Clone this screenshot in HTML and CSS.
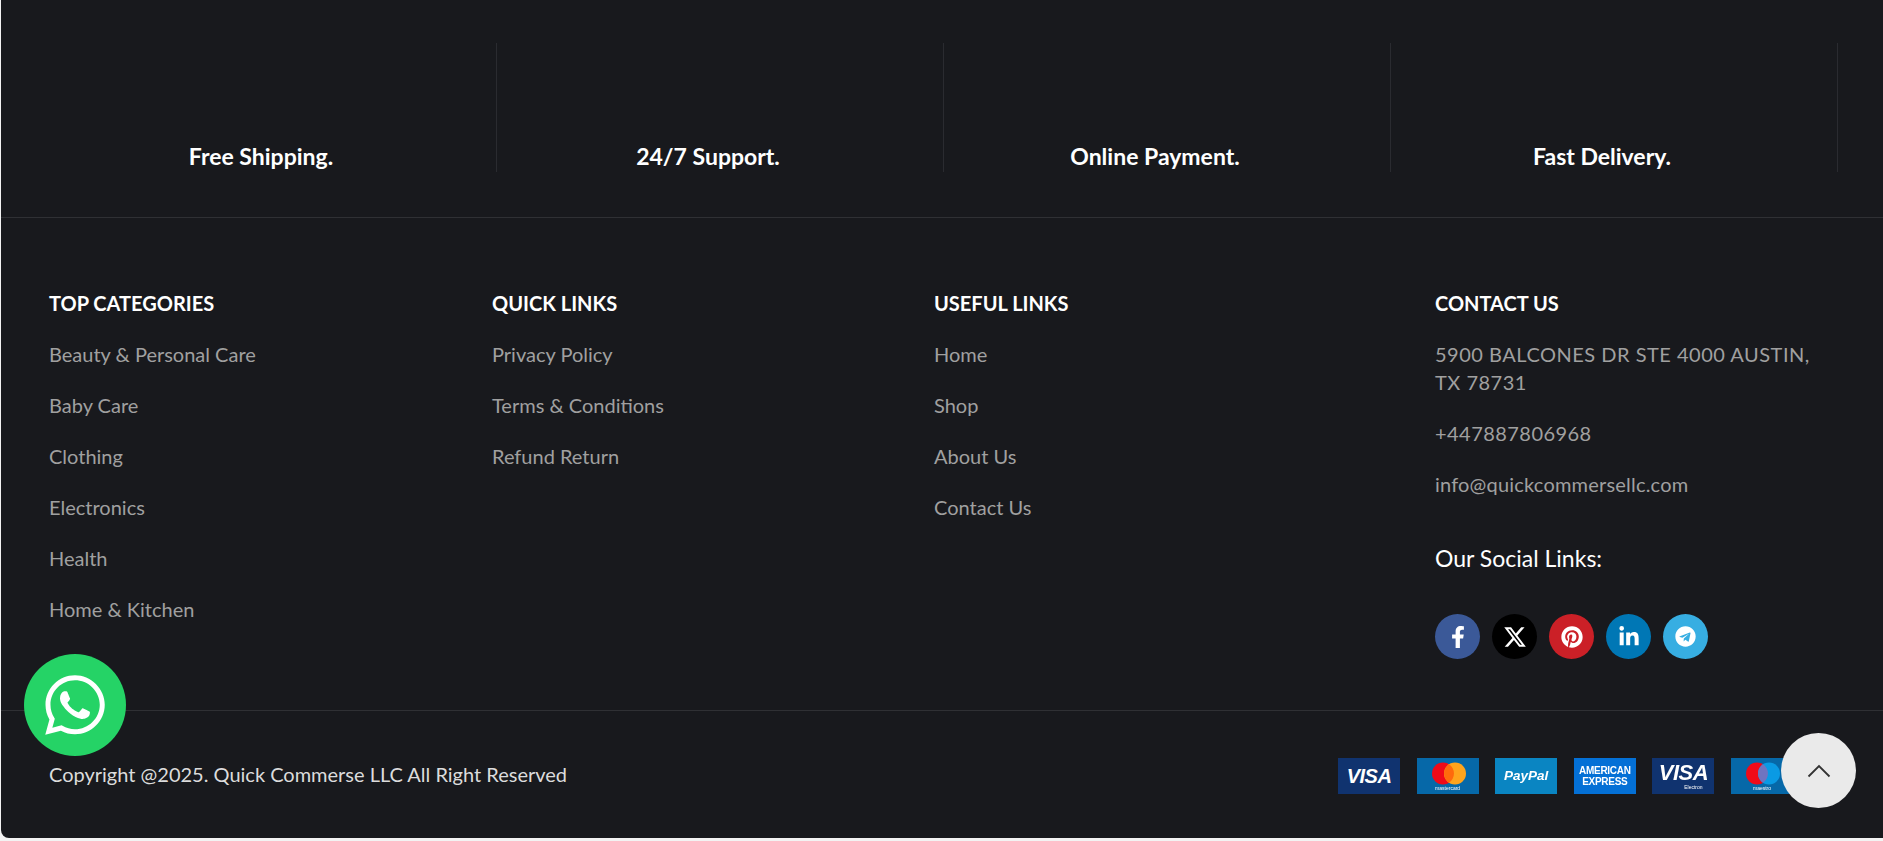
FILE: index.html
```html
<!DOCTYPE html>
<html lang="en">
<head>
<meta charset="utf-8">
<title>Quick Commerse LLC</title>
<link rel="stylesheet" href="styles.css">
</head>
<body>
<footer class="footer">
  <section class="features">
    <div class="feature"><span>Free Shipping.</span></div>
    <div class="feature"><span>24/7 Support.</span></div>
    <div class="feature"><span>Online Payment.</span></div>
    <div class="feature"><span>Fast Delivery.</span></div>
  </section>
  <section class="links">
    <div>
      <h4 class="heading">TOP CATEGORIES</h4>
      <ul class="list">
        <li>Beauty &amp; Personal Care</li>
        <li>Baby Care</li>
        <li>Clothing</li>
        <li>Electronics</li>
        <li>Health</li>
        <li>Home &amp; Kitchen</li>
      </ul>
    </div>
    <div>
      <h4 class="heading">QUICK LINKS</h4>
      <ul class="list">
        <li>Privacy Policy</li>
        <li>Terms &amp; Conditions</li>
        <li>Refund Return</li>
      </ul>
    </div>
    <div>
      <h4 class="heading">USEFUL LINKS</h4>
      <ul class="list">
        <li>Home</li>
        <li>Shop</li>
        <li>About Us</li>
        <li>Contact Us</li>
      </ul>
    </div>
    <div>
      <h4 class="heading">CONTACT US</h4>
      <ul class="list contact">
        <li class="address">5900 BALCONES DR STE 4000 AUSTIN,<br>TX 78731</li>
        <li class="phone">+447887806968</li>
        <li class="email">info@quickcommersellc.com</li>
      </ul>
      <h5 class="social-title">Our Social Links:</h5>
      <div class="socials">
        <a class="social fb"><svg viewBox="0 0 320 512" class="i-fb"><path d="M279.14 288l14.22-92.66h-88.91v-60.13c0-25.35 12.42-50.06 52.24-50.06h40.42V6.26S260.43 0 225.36 0c-73.22 0-121.08 44.38-121.08 124.72v70.62H22.89V288h81.39v224h100.17V288z"/></svg></a>
        <a class="social xx"><svg viewBox="0 0 24 24" class="i-x"><path d="M18.244 2.25h3.308l-7.227 8.26 8.502 11.24H16.17l-5.214-6.817L4.99 21.75H1.68l7.73-8.835L1.254 2.25H8.08l4.713 6.231zm-1.161 17.52h1.833L7.084 4.126H5.117z"/></svg></a>
        <a class="social pin"><svg viewBox="0 0 496 512" class="i-pin"><path d="M496 256c0 137-111 248-248 248-25.6 0-50.2-3.9-73.4-11.1 10.1-16.5 25.2-43.5 30.8-65 3-11.6 15.4-59 15.4-59 8.1 15.4 31.7 28.5 56.8 28.5 74.8 0 128.7-68.8 128.7-154.3 0-81.9-66.9-143.2-152.9-143.2-107 0-163.9 71.8-163.9 150.1 0 36.4 19.4 81.7 50.3 96.1 4.7 2.2 7.2 1.2 8.3-3.3.8-3.4 5-20.3 6.9-28.1.6-2.5.3-4.7-1.7-7.1-10.1-12.5-18.3-35.3-18.3-56.6 0-54.7 41.4-107.6 112-107.6 60.9 0 103.6 41.5 103.6 100.9 0 67.1-33.9 113.6-78 113.6-24.3 0-42.6-20.1-36.7-44.8 7-29.5 20.5-61.3 20.5-82.6 0-19-10.2-34.9-31.4-34.9-24.9 0-44.9 25.7-44.9 60.2 0 22 7.4 36.8 7.4 36.8s-24.5 103.8-29 123.2c-5 21.4-3 51.6-.9 71.2C65.4 450.9 0 361.1 0 256 0 119 111 8 248 8s248 111 248 248z"/></svg></a>
        <a class="social li"><svg viewBox="0 0 448 512" class="i-li"><path d="M100.28 448H7.4V148.9h92.88zM53.79 108.1C24.09 108.1 0 83.5 0 53.8a53.79 53.79 0 0 1 107.58 0c0 29.7-24.1 54.3-53.79 54.3zM447.9 448h-92.68V302.4c0-34.7-.7-79.2-48.29-79.2-48.29 0-55.69 37.7-55.69 76.7V448h-92.78V148.9h89.08v40.8h1.3c12.4-23.5 42.69-48.3 87.88-48.3 94 0 111.28 61.9 111.28 142.3V448z"/></svg></a>
        <a class="social tg"><svg viewBox="0 0 496 512" class="i-tg"><path d="M248 8C111 8 0 119 0 256s111 248 248 248 248-111 248-248S385 8 248 8zm121.8 169.9l-40.7 191.8c-3 13.6-11.1 16.9-22.4 10.5l-62-45.7-29.9 28.8c-3.3 3.3-6.1 6.1-12.5 6.1l4.4-63.1 114.9-103.8c5-4.4-1.1-6.9-7.7-2.5l-142 89.4-61.2-19.1c-13.3-4.2-13.6-13.3 2.8-19.7l239.1-92.2c11.1-4 20.8 2.7 17.2 19.5z"/></svg></a>
      </div>
    </div>
  </section>
  <section class="bottom">
    <p class="copyright">Copyright @2025. Quick Commerse LLC All Right Reserved</p>
    <div class="cards">
      <div class="card visa"><span class="c-visa">VISA</span></div>
      <div class="card master">
        <svg viewBox="0 0 62 36" class="card-art"><circle cx="26" cy="15.5" r="11" fill="#f00a18"/><circle cx="38" cy="15.5" r="11" fill="#ffa41c"/><path d="M32 6.3a11 11 0 0 1 0 18.4a11 11 0 0 1 0-18.4z" fill="#ff6a0c"/></svg>
        <span class="c-tiny">mastercard</span>
      </div>
      <div class="card paypal"><span class="c-paypal">PayPal</span></div>
      <div class="card amex"><span class="c-amex">AMERICAN<br>EXPRESS</span></div>
      <div class="card visa"><span class="c-visa c-visa-e">VISA</span><span class="c-tiny c-electron">Electron</span></div>
      <div class="card master">
        <svg viewBox="0 0 62 36" class="card-art"><circle cx="26" cy="15.5" r="11" fill="#f00a18"/><circle cx="38" cy="15.5" r="11" fill="#0a9ae4"/><path d="M32 6.3a11 11 0 0 1 0 18.4a11 11 0 0 1 0-18.4z" fill="#6f74c0"/></svg>
        <span class="c-tiny">maestro</span>
      </div>
    </div>
  </section>
</footer>
<a class="whatsapp"><svg viewBox="0 0 448 512"><path d="M380.900 97.100C339 55.100 283.200 32 223.900 32c-122.400 0-222 99.600-222 222 0 39.100 10.200 77.300 29.600 111L0 480l117.700-30.900c32.400 17.700 68.900 27 106.100 27h.1c122.300 0 224.100-99.600 224.100-222 0-59.300-25.200-115-67.100-157zm-157 341.600c-33.200 0-65.700-8.900-94-25.700l-6.700-4-69.800 18.300L72 359.200l-4.400-7c-18.500-29.400-28.200-63.300-28.200-98.200 0-101.700 82.800-184.500 184.600-184.500 49.300 0 95.600 19.200 130.400 54.100 34.800 34.900 56.200 81.200 56.100 130.500 0 101.800-84.900 184.600-186.600 184.600zm101.200-138.200c-5.500-2.800-32.800-16.200-37.900-18-5.100-1.900-8.800-2.800-12.500 2.800-3.700 5.600-14.300 18-17.600 21.800-3.200 3.700-6.500 4.200-12 1.400-32.600-16.300-54-29.100-75.500-66-5.700-9.800 5.700-9.100 16.300-30.300 1.800-3.700.9-6.900-.5-9.700-1.400-2.800-12.500-30.100-17.100-41.200-4.500-10.800-9.100-9.300-12.500-9.500-3.200-.2-6.900-.2-10.600-.2-3.700 0-9.700 1.400-14.800 6.900-5.100 5.600-19.400 19-19.400 46.300 0 27.300 19.900 53.700 22.600 57.400 2.800 3.700 39.100 59.700 94.800 83.800 35.200 15.200 49 16.500 66.600 13.900 10.700-1.600 32.800-13.400 37.400-26.400 4.600-13 4.600-24.100 3.200-26.400-1.300-2.500-5-3.900-10.500-6.600z"/></svg></a>
<a class="to-top"><svg viewBox="0 0 24 14"><path d="M1.500 12.500L12 2l10.500 10.500"/></svg></a>
</body>
</html>
```
FILE: styles.css
```css
* { box-sizing: border-box; }
html, body { margin: 0; height: 841px; overflow: hidden; }
body {
  background: #f3f3f3;
  padding: 0 0 3px 1px;
  font-family: Lato, "Open Sans", sans-serif;
  position: relative;
}
.footer {
  height: 838px;
  background: #18191d;
  border-bottom-left-radius: 8px;
  display: flex;
  flex-direction: column;
}
.features {
  display: grid;
  grid-template-columns: repeat(4, 447px);
  padding: 43px 0 45px 49px;
  border-bottom: 1px solid #2f3034;
}
.feature {
  height: 129px;
  padding: 0 24px 2px 0;
  border-right: 1px solid #2a2b30;
  display: flex;
  align-items: flex-end;
  justify-content: center;
  color: #fff;
  font-size: 23px;
  font-weight: 700;
  line-height: 28px;
}
.links {
  display: grid;
  grid-template-columns: 443px 442px 501px 1fr;
  padding: 71px 0 51px 48px;
  border-bottom: 1px solid #2f3034;
}
.heading {
  margin: 0 0 22.5px;
  color: #fff;
  font-size: 20px;
  font-weight: 700;
  line-height: 28px;
}
.list { margin: 0; padding: 0; list-style: none; }
.list li {
  color: #a0a0a0;
  font-size: 20px;
  line-height: 28px;
  margin-bottom: 23.2px;
}
.list .address { letter-spacing: 0.5px; }
.list .phone { letter-spacing: 0.45px; }
.list .email { letter-spacing: 0.2px; }
.social-title {
  margin: 46px 0 42.5px;
  color: #fff;
  font-size: 23px;
  font-weight: 400;
  line-height: 28px;
}
.socials { display: flex; gap: 12px; }
.social {
  width: 45px;
  height: 45px;
  border-radius: 50%;
  display: flex;
  align-items: center;
  justify-content: center;
}
.social svg { fill: #fff; display: block; }
.fb { background: #3b5998; }
.xx { background: #000; }
.pin { background: #cb2027; }
.li { background: #0077b5; }
.tg { background: #37aee2; }
.i-fb { height: 22px; width: 14px; }
.i-x { height: 24px; width: 24px; }
.i-pin { height: 22px; width: 22px; }
.i-li { height: 22px; width: 20px; }
.i-tg { height: 21px; width: 21px; }
.bottom {
  flex: 1;
  display: flex;
  align-items: center;
  justify-content: space-between;
  padding: 0 90px 0 48px;
}
.copyright {
  margin: 0 0 2px;
  color: #dcdcdc;
  font-size: 20px;
  line-height: 28px;
}
.cards { display: flex; gap: 16.6px; margin-top: 2px; filter: blur(0.5px); }
.card {
  width: 62px;
  height: 36px;
  position: relative;
  display: flex;
  flex-direction: column;
  align-items: center;
  justify-content: center;
  color: #fff;
  overflow: hidden;
}
.visa { background: #10336f; }
.master { background: #0668a8; }
.paypal { background: #0a85c2; }
.amex { background: #0470d6; }
.card-art { position: absolute; left: 0; top: 0; width: 62px; height: 36px; }
.c-visa {
  font: italic 700 20px/20px "Liberation Sans", sans-serif;
  letter-spacing: -0.5px;
  margin-top: 1px;
}
.c-visa-e { font-size: 22px; margin-top: -5px; }
.c-paypal { font: italic 700 13.5px/16px "Liberation Sans", sans-serif; }
.c-amex {
  font: 700 10px/11px "Liberation Sans", sans-serif;
  letter-spacing: -0.3px;
  text-align: center;
}
.c-tiny {
  position: absolute;
  left: 0;
  right: 0;
  bottom: 3px;
  font: 5px/6px "Liberation Sans", sans-serif;
  text-align: center;
}
.c-electron { left: 20px; bottom: 4px; }
.whatsapp {
  position: absolute;
  left: 24px;
  top: 654px;
  width: 102px;
  height: 102px;
  border-radius: 50%;
  background: #25d366;
  display: flex;
  align-items: center;
  justify-content: center;
}
.whatsapp svg { width: 60px; height: 68px; fill: #fff; display: block; }
.to-top {
  position: absolute;
  left: 1781px;
  top: 733px;
  width: 75px;
  height: 75px;
  border-radius: 50%;
  background: #eaeaea;
  display: flex;
  align-items: center;
  justify-content: center;
}
.to-top svg {
  width: 24px;
  height: 14px;
  fill: none;
  stroke: #333;
  stroke-width: 1.8;
}
```
